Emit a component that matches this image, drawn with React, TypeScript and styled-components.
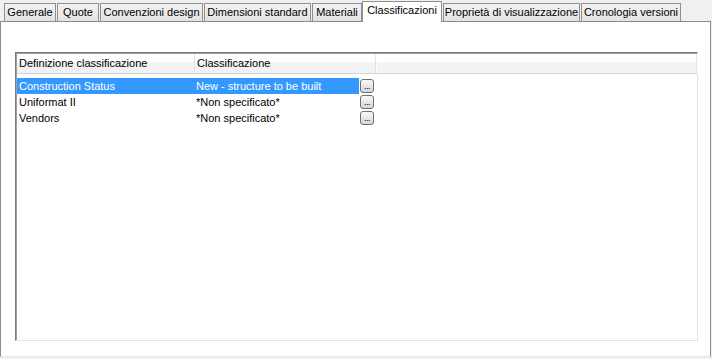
import React, { FunctionComponent } from 'react'
import styled, { createGlobalStyle } from 'styled-components'

const GlobalStyle = createGlobalStyle`
    html, body {
        margin: 0;
        padding: 0;
        background: #f0f0f0;
    }
    * {
        box-sizing: border-box;
    }
`

const Window = styled.div`
    width: 712px;
    height: 359px;
    background: #f0f0f0;
    font-family: 'Liberation Sans', Arial, sans-serif;
    font-size: 11px;
    color: #000;
    overflow: hidden;
`

const TabStrip = styled.div`
    display: flex;
    align-items: flex-end;
    height: 21px;
    padding-left: 4px;
    position: relative;
    z-index: 1;
`

const Tab = styled.div<{ $w: number; $active?: boolean }>`
    width: ${(p) => p.$w}px;
    height: ${(p) => (p.$active ? 21 : 18)}px;
    margin-right: 1px;
    margin-bottom: ${(p) => (p.$active ? -1 : 0)}px;
    margin-left: ${(p) => (p.$active ? -1 : 0)}px;
    border: 1px solid #8e8f8f;
    border-bottom: none;
    background: ${(p) => (p.$active ? '#ffffff' : 'linear-gradient(#f2f2f2, #e3e3e3)')};
    display: flex;
    justify-content: center;
    padding-top: 2px;
    white-space: nowrap;
    line-height: 13px;
`

const Panel = styled.div`
    width: 711px;
    height: 336px;
    background: #ffffff;
    border: 1px solid #898c95;
    border-bottom-color: #e6e6e6;
    padding: 30px 12px 15px 14px;
`

const ListView = styled.div`
    height: 100%;
    border: 1px solid;
    border-color: #7a7a7a #e3e3e3 #e3e3e3 #7a7a7a;
    box-shadow: inset 1px 1px 0 #a0a0a0;
    background: #ffffff;
    padding: 1px 0 0 1px;
`

const HeaderRow = styled.div`
    display: flex;
    height: 20px;
    border-bottom: 1px solid #d5d5d5;
    background: linear-gradient(#ffffff 0, #ffffff 8px, #f3f3f5 8px, #f1f2f4 100%);
`

const HeaderCell = styled.div<{ $w?: number }>`
    ${(p) => (p.$w ? `width: ${p.$w}px;` : 'flex: 1;')}
    padding-left: 2px;
    line-height: 19px;
    border-right: 1px solid #e3e4e6;
    box-shadow: 1px 0 0 #ffffff;
`

const Rows = styled.div`
    padding-top: 4px;
`

const Row = styled.div`
    display: flex;
    height: 16px;
    align-items: stretch;
`

const NameCell = styled.div<{ $selected?: boolean }>`
    width: 178px;
    padding-left: 2px;
    line-height: 16px;
    background: ${(p) => (p.$selected ? '#3399ff' : 'transparent')};
    color: ${(p) => (p.$selected ? '#ffffff' : '#000000')};
`

const ValueCell = styled.div<{ $selected?: boolean }>`
    width: 164px;
    padding-left: 1px;
    line-height: 16px;
    background: ${(p) => (p.$selected ? '#3399ff' : 'transparent')};
    color: ${(p) => (p.$selected ? '#ffffff' : '#000000')};
    white-space: nowrap;
`

const BrowseButton = styled.div`
    width: 14px;
    height: 14px;
    margin: 1px 0 0 1px;
    border: 1px solid #6f6f6f;
    border-radius: 3px;
    background: linear-gradient(#fbfbfb, #e6e6e6 50%, #d8d8d8);
    font-size: 9px;
    line-height: 9px;
    text-align: center;
    letter-spacing: -0.5px;
    display: flex;
    align-items: flex-end;
    justify-content: center;
    padding-bottom: 1px;
`

const tabs = [
    { label: 'Generale', w: 52 },
    { label: 'Quote', w: 42 },
    { label: 'Convenzioni design', w: 103 },
    { label: 'Dimensioni standard', w: 107 },
    { label: 'Materiali', w: 50 },
    { label: 'Classificazioni', w: 80, active: true },
    { label: 'Proprietà di visualizzazione', w: 137 },
    { label: 'Cronologia versioni', w: 100 },
]

const rows = [
    { name: 'Construction Status', value: 'New - structure to be built', selected: true },
    { name: 'Uniformat II', value: '*Non specificato*' },
    { name: 'Vendors', value: '*Non specificato*' },
]

const App: FunctionComponent = () => {
    return (
        <Window>
            <GlobalStyle />
            <TabStrip>
                {tabs.map((t) => (
                    <Tab key={t.label} $w={t.w} $active={t.active}>
                        {t.label}
                    </Tab>
                ))}
            </TabStrip>
            <Panel>
                <ListView>
                    <HeaderRow>
                        <HeaderCell $w={178}>Definizione classificazione</HeaderCell>
                        <HeaderCell $w={181}>Classificazione</HeaderCell>
                        <HeaderCell />
                    </HeaderRow>
                    <Rows>
                        {rows.map((r) => (
                            <Row key={r.name}>
                                <NameCell $selected={r.selected}>{r.name}</NameCell>
                                <ValueCell $selected={r.selected}>{r.value}</ValueCell>
                                <BrowseButton>...</BrowseButton>
                            </Row>
                        ))}
                    </Rows>
                </ListView>
            </Panel>
        </Window>
    )
}

export default App
